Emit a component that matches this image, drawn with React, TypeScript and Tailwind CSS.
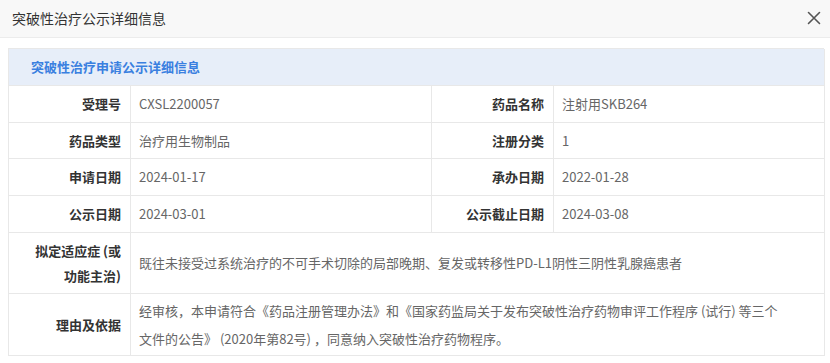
import React from "react";

const font = { fontFamily: '"Noto Sans CJK SC", "Microsoft YaHei", sans-serif' };

function Label({ children, className = "" }: { children: React.ReactNode; className?: string }) {
  return (
    <div
      className={`flex items-center justify-end border-b border-r border-[#e8e8e8] pr-[9px] text-right text-[13px] font-bold text-[#333] ${className}`}
    >
      {children}
    </div>
  );
}

function Value({ children, className = "" }: { children: React.ReactNode; className?: string }) {
  return (
    <div
      className={`flex items-center border-b border-r border-[#e8e8e8] pl-[8px] text-[13px] text-[#666] ${className}`}
    >
      {children}
    </div>
  );
}

export default function App() {
  return (
    <div className="h-[363px] w-[830px] overflow-hidden bg-white" style={font}>
      <div className="flex h-[38px] items-center justify-between border-b border-[#ececec] bg-[#f8f8f8] pl-[12px] pr-[8px]">
        <span className="text-[14px] text-[#333]">突破性治疗公示详细信息</span>
        <svg width="14" height="14" viewBox="0 0 14 14" className="mr-[1px] mt-[-2px]">
          <path d="M1.5 1.5 L12.5 12.5 M12.5 1.5 L1.5 12.5" stroke="#555" strokeWidth="1.6" strokeLinecap="round" />
        </svg>
      </div>
      <div className="ml-[8px] mt-[10px] grid w-[816px] grid-cols-[122px_301px_122px_271px] border-l border-t border-[#e8e8e8]">
        <div className="col-span-4 flex h-[37px] items-center border-b border-r border-[#e8e8e8] bg-[#e7eef9] pl-[22px] text-[13px] font-bold text-[#3a80e0]">
          突破性治疗申请公示详细信息
        </div>

        <Label className="h-[37px]">受理号</Label>
        <Value className="h-[37px]">CXSL2200057</Value>
        <Label className="h-[37px]">药品名称</Label>
        <Value className="h-[37px]">注射用SKB264</Value>

        <Label className="h-[36px]">药品类型</Label>
        <Value className="h-[36px]">治疗用生物制品</Value>
        <Label className="h-[36px]">注册分类</Label>
        <Value className="h-[36px]">1</Value>

        <Label className="h-[37px]">申请日期</Label>
        <Value className="h-[37px]">2024-01-17</Value>
        <Label className="h-[37px]">承办日期</Label>
        <Value className="h-[37px]">2022-01-28</Value>

        <Label className="h-[37px]">公示日期</Label>
        <Value className="h-[37px]">2024-03-01</Value>
        <Label className="h-[37px]">公示截止日期</Label>
        <Value className="h-[37px]">2024-03-08</Value>

        <Label className="h-[61px] leading-[25px]">
          <span>
            拟定适应症 (或
            <br />
            功能主治)
          </span>
        </Label>
        <Value className="col-span-3 h-[61px]">既往未接受过系统治疗的不可手术切除的局部晚期、复发或转移性PD-L1阴性三阴性乳腺癌患者</Value>

        <Label className="h-[62px]">理由及依据</Label>
        <Value className="col-span-3 h-[62px] pr-[10px] leading-[28px]">
          <span>
            经审核，本申请符合《药品注册管理办法》和《国家药监局关于发布突破性治疗药物审评工作程序 (试行) 等三个
            <br />
            文件的公告》 (2020年第82号) ，同意纳入突破性治疗药物程序。
          </span>
        </Value>
      </div>
    </div>
  );
}
